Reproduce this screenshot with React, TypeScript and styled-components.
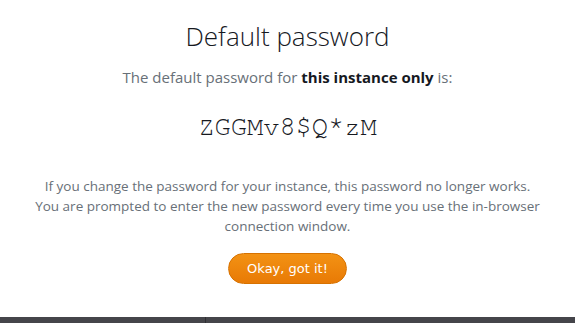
import React from "react";
import styled, { createGlobalStyle } from "styled-components";

const Global = createGlobalStyle`
  html, body { margin: 0; padding: 0; background: #ffffff; }
  body { font-family: "Open Sans", "Noto Sans", sans-serif; }
  #root { height: 323px; }
`;

const Page = styled.div`
  height: 323px;
  display: flex;
  flex-direction: column;
`;

const Dialog = styled.main`
  flex: 1;
  display: flex;
  flex-direction: column;
  align-items: center;
  padding-top: 18px;
`;

const Title = styled.h1`
  margin: 0;
  font-family: "Open Sans", sans-serif;
  font-weight: 300;
  font-size: 26px;
  line-height: 36px;
  color: #16191f;
`;

const Lead = styled.p`
  margin: 12px 0 0;
  font-size: 15px;
  line-height: 22px;
  color: #687078;
`;

const Strong = styled.strong`
  font-weight: 700;
  color: #16191f;
`;

const Password = styled.div`
  margin-top: 24px;
  font-family: "Nimbus Mono PS", "FreeMono", "Courier", "Liberation Mono", monospace;
  font-size: 27px;
  line-height: 30px;
  color: #16191f;
`;

const Note = styled.p`
  margin: 34px 0 0;
  font-size: 13.5px;
  line-height: 20px;
  color: #687078;
  text-align: center;
`;

const Button = styled.button`
  margin-top: 17px;
  width: 119px;
  height: 31px;
  border-radius: 16px;
  border: 1px solid #d77200;
  background: linear-gradient(#f39214, #e87a05);
  color: #ffffff;
  font-family: "DejaVu Sans", sans-serif;
  font-size: 13px;
  padding: 0;
`;

const Footer = styled.footer`
  height: 6px;
  background: #45454a;
  display: grid;
  grid-template-columns: 205px 1fr;
`;

const FooterCell = styled.div<{ $divided?: boolean }>`
  border-left: ${(p) => (p.$divided ? "1px solid #2f2f33" : "none")};
`;

export default function App() {
  return (
    <Page>
      <Global />
      <Dialog>
        <Title>Default password</Title>
        <Lead>
          The default password for <Strong>this instance only</Strong> is:
        </Lead>
        <Password>ZGGMv8$Q*zM</Password>
        <Note>
          If you change the password for your instance, this password no longer works.
          <br />
          You are prompted to enter the new password every time you use the in-browser
          <br />
          connection window.
        </Note>
        <Button>Okay, got it!</Button>
      </Dialog>
      <Footer>
        <FooterCell />
        <FooterCell $divided />
      </Footer>
    </Page>
  );
}
